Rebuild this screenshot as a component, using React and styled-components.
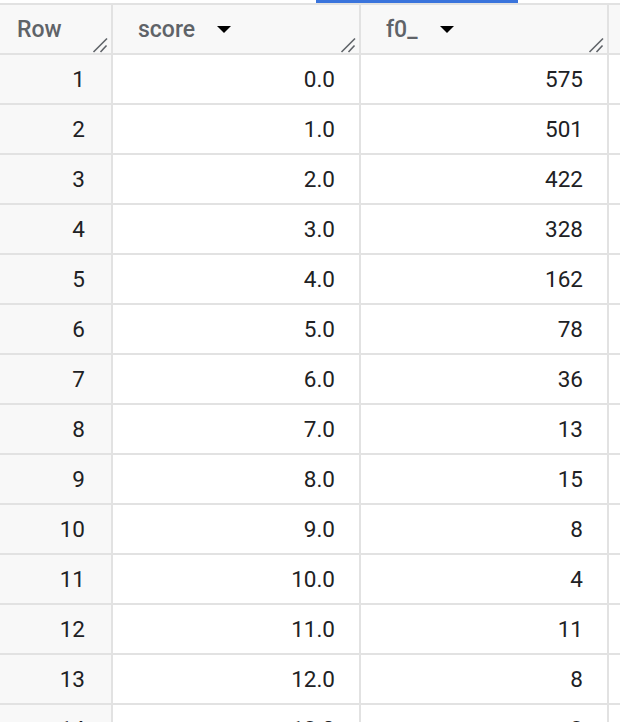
import React from "react";
import styled, { createGlobalStyle } from "styled-components";

const Global = createGlobalStyle`
  html, body { margin: 0; padding: 0; background: #ffffff; }
  body { font-family: Roboto, "Noto Sans", Arial, sans-serif; }
`;

const Wrap = styled.div`
  position: relative;
  width: 620px;
  height: 722px;
  overflow: hidden;
  background: #ffffff;
  padding-top: 3px;
  box-sizing: border-box;
`;

const ScrollMark = styled.div`
  position: absolute;
  top: 0;
  left: 316px;
  width: 202px;
  height: 3px;
  background: #3a74dc;
`;

const Grid = styled.div`
  display: grid;
  grid-template-columns: 113px 248px 248px 1fr;
  border-top: 2px solid #e2e2e2;
`;

const HeadCell = styled.div`
  position: relative;
  height: 48px;
  display: flex;
  align-items: center;
  gap: 22px;
  padding-left: ${p => (p.$row ? "17px" : "25px")};
  background: #f8f8f8;
  border-right: ${p => (p.$last ? "none" : "2px solid #e2e2e2")};
  border-bottom: 2px solid #e2e2e2;
  color: #5f6368;
  font-size: 23px;
  font-weight: 500;
  box-sizing: content-box;
`;

const Cell = styled.div`
  height: 48px;
  display: flex;
  align-items: center;
  justify-content: flex-end;
  padding-right: ${p => (p.$row ? "26px" : "24px")};
  background: ${p => (p.$row ? "#f8f8f8" : "#ffffff")};
  border-right: ${p => (p.$last ? "none" : "2px solid #e2e2e2")};
  border-bottom: 2px solid #e2e2e2;
  color: #202124;
  font-size: 22.5px;
  font-weight: 400;
  box-sizing: content-box;
`;

const Arrow = styled.span`
  width: 0;
  height: 0;
  border-left: 7px solid transparent;
  border-right: 7px solid transparent;
  border-top: 7px solid #000;
  margin-top: 1px;
`;

const Handle = styled.svg`
  position: absolute;
  right: 3px;
  bottom: 0px;
`;

const ResizeHandle = () => (
  <Handle width="16" height="16" viewBox="0 0 16 16">
    <line x1="15" y1="1.5" x2="1.5" y2="15" stroke="#5f6368" strokeWidth="1.6" />
    <line x1="14.5" y1="8.5" x2="8.5" y2="15" stroke="#5f6368" strokeWidth="1.6" />
  </Handle>
);

const rows = [
  ["0.0", "575"],
  ["1.0", "501"],
  ["2.0", "422"],
  ["3.0", "328"],
  ["4.0", "162"],
  ["5.0", "78"],
  ["6.0", "36"],
  ["7.0", "13"],
  ["8.0", "15"],
  ["9.0", "8"],
  ["10.0", "4"],
  ["11.0", "11"],
  ["12.0", "8"],
  ["13.0", "3"],
];

export default function App() {
  return (
    <>
      <Global />
      <Wrap>
        <ScrollMark />
        <Grid>
          <HeadCell $row>
            Row
            <ResizeHandle />
          </HeadCell>
          <HeadCell>
            score
            <Arrow />
            <ResizeHandle />
          </HeadCell>
          <HeadCell>
            f0_
            <Arrow />
            <ResizeHandle />
          </HeadCell>
          <HeadCell $last />
          {rows.map((r, i) => (
            <React.Fragment key={i}>
              <Cell $row>{i + 1}</Cell>
              <Cell>{r[0]}</Cell>
              <Cell>{r[1]}</Cell>
              <Cell $last />
            </React.Fragment>
          ))}
        </Grid>
      </Wrap>
    </>
  );
}
